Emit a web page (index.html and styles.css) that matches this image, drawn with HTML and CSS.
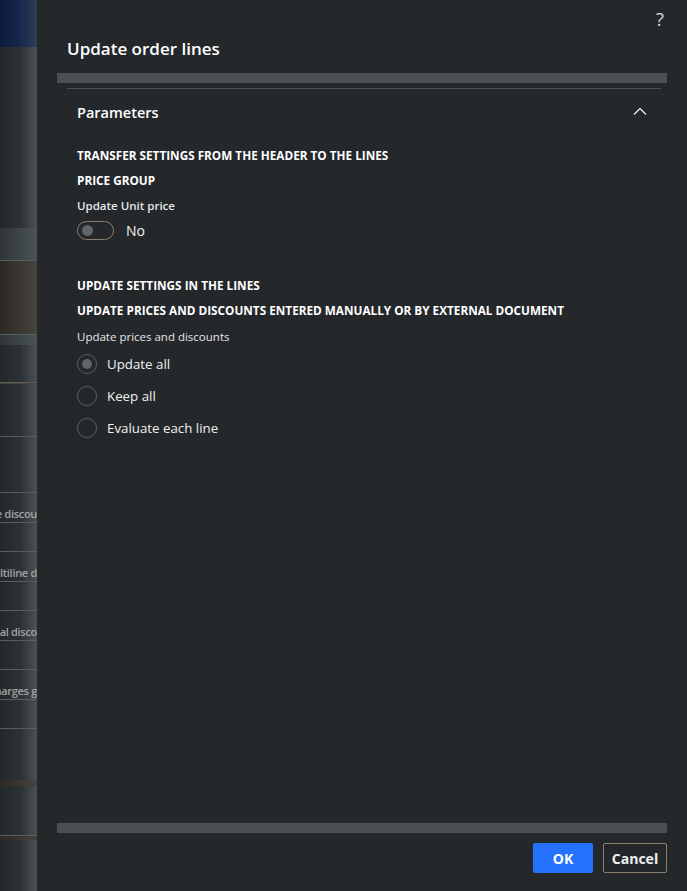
FILE: index.html
```html
<!DOCTYPE html>
<html lang="en">
<head>
  <meta charset="UTF-8">
  <meta name="viewport" content="width=device-width, initial-scale=1.0">
  <title>Update order lines</title>
  <link rel="stylesheet" href="styles.css">
</head>
<body>
  <div class="backdrop">
    <div class="bd-top"></div>
    <div class="bd-gap" style="height:181px"></div>
    <div class="bd-row bd-light" style="height:33px"></div>
    <div class="bd-row bd-brown" style="height:74px"></div>
    <div class="bd-light" style="height:10px"></div>
    <div class="bd-row" style="height:38px"></div>
    <div class="bd-row bd-tan" style="height:54px"></div>
    <div class="bd-row" style="height:56px"></div>
    <div class="bd-row bd-text" style="height:30px"><span>Line discou</span></div>
    <div class="bd-row" style="height:29px"></div>
    <div class="bd-row bd-text" style="height:30px"><span>Multiline d</span></div>
    <div class="bd-row" style="height:29px"></div>
    <div class="bd-row bd-text" style="height:30px"><span>Total disco</span></div>
    <div class="bd-row" style="height:29px"></div>
    <div class="bd-row bd-text" style="height:30px"><span>Charges g</span></div>
    <div class="bd-row" style="height:29px"></div>
    <div class="bd-gap" style="height:51px"></div>
    <div class="bd-brown" style="height:6px"></div>
    <div class="bd-row" style="height:50px"></div>
    <div class="bd-brown" style="height:4px"></div>
  </div>

  <div class="panel">
    <div class="help">?</div>
    <h1>Update order lines</h1>
    <div class="scrollbar"></div>

    <div class="section">
      <div class="section-head">
        <span>Parameters</span>
        <svg class="chevron" width="14" height="8" viewBox="0 0 14 8">
          <path d="M1 7.5 L7 1.5 L13 7.5" fill="none" stroke="#e6e6e6" stroke-width="1.3"/>
        </svg>
      </div>

      <div class="group">TRANSFER SETTINGS FROM THE HEADER TO THE LINES</div>
      <div class="group">PRICE GROUP</div>
      <div class="field-label">Update Unit price</div>
      <div class="toggle-row">
        <span class="toggle"><span class="knob"></span></span>
        <span>No</span>
      </div>

      <div class="group group-spaced">UPDATE SETTINGS IN THE LINES</div>
      <div class="group">UPDATE PRICES AND DISCOUNTS ENTERED MANUALLY OR BY EXTERNAL DOCUMENT</div>
      <div class="field-label plain">Update prices and discounts</div>
      <div class="radios">
        <div class="radio-row"><span class="radio checked"></span>Update all</div>
        <div class="radio-row"><span class="radio"></span>Keep all</div>
        <div class="radio-row"><span class="radio"></span>Evaluate each line</div>
      </div>
    </div>

    <div class="spacer"></div>
    <div class="scrollbar"></div>
    <div class="footer">
      <button class="btn btn-ok">OK</button>
      <button class="btn btn-cancel">Cancel</button>
    </div>
  </div>
</body>
</html>
```

FILE: styles.css
```css
body {
  margin: 0;
  height: 891px;
  display: flex;
  overflow: hidden;
  background: #24282b;
  font-family: "Open Sans", "Noto Sans", sans-serif;
  color: #f2f2f2;
}

.backdrop {
  width: 37px;
  flex: none;
  display: flex;
  flex-direction: column;
  background: linear-gradient(to right, #24282b 0%, #2c3134 55%, #4b5255 100%);
  overflow: hidden;
}

.bd-top {
  height: 47px;
  background: linear-gradient(to right, #0c1b3a 0%, #16264a 50%, #2c3d55 100%);
}

.bd-row {
  border-bottom: 1px solid #5a5e5f;
  box-sizing: border-box;
}

.bd-light {
  background: linear-gradient(to right, #2f3538, #4a5356);
}

.bd-brown {
  background: linear-gradient(to right, #2c2925, #46443f);
}

.bd-tan {
  border-top: 1px solid #4a443c;
}

.bd-text {
  display: flex;
  justify-content: flex-end;
  align-items: flex-end;
  padding-bottom: 1px;
  font-size: 11px;
  font-weight: 600;
  letter-spacing: -0.3px;
  color: #a3a3a3;
  white-space: nowrap;
}

.panel {
  flex: 1;
  display: flex;
  flex-direction: column;
  min-width: 0;
}

.help {
  align-self: flex-end;
  margin: 8px 23px 0 0;
  font-size: 19px;
  line-height: 22px;
  color: #d6d6d6;
}

h1 {
  margin: 6px 0 0 30px;
  font-size: 17px;
  font-weight: 600;
  line-height: 26px;
  color: #ffffff;
}

.scrollbar {
  height: 10px;
  margin: 11px 20px 0;
  background: #4a5053;
}

.section {
  margin: 5px 26px 0 30px;
  border-top: 1px solid #4a4f52;
  padding: 0 10px;
}

.section-head {
  display: flex;
  justify-content: space-between;
  align-items: center;
  height: 46px;
  font-size: 14.5px;
  font-weight: 600;
  color: #ffffff;
}

.chevron {
  margin: 0 4px 3px 0;
}

.group {
  font-size: 11.75px;
  font-weight: 700;
  line-height: 25px;
  color: #ffffff;
}

.section-head + .group {
  margin-top: 8px;
}

.group-spaced {
  margin-top: 32px;
}

.field-label {
  margin-top: 2px;
  font-size: 11.5px;
  font-weight: 600;
  line-height: 22px;
  color: #e6e6e6;
}

.field-label.plain {
  font-weight: 400;
  margin-top: 3px;
}

.toggle-row {
  display: flex;
  align-items: center;
  gap: 12px;
  height: 22px;
  margin-top: 2px;
  font-size: 14px;
}

.toggle {
  width: 37px;
  height: 19px;
  box-sizing: border-box;
  border: 1px solid #8b7f6f;
  border-radius: 10px;
  display: flex;
  align-items: center;
  padding-left: 4px;
}

.knob {
  width: 11px;
  height: 11px;
  border-radius: 50%;
  background: #5f6569;
}

.radio-row {
  display: flex;
  align-items: center;
  gap: 10px;
  height: 32px;
  font-size: 13.3px;
  color: #f0f0f0;
}

.radio {
  width: 20px;
  height: 20px;
  box-sizing: border-box;
  border: 1px solid #5a5f62;
  border-radius: 50%;
  display: flex;
  align-items: center;
  justify-content: center;
}

.radio.checked::after {
  content: "";
  width: 10px;
  height: 10px;
  border-radius: 50%;
  background: #5f6569;
}

.spacer {
  flex: 1;
}

.footer {
  display: flex;
  justify-content: flex-end;
  gap: 10px;
  padding: 10px 20px 18px;
}

.btn {
  height: 30px;
  font-family: inherit;
  font-size: 14px;
  font-weight: 700;
  border-radius: 2px;
  cursor: pointer;
}

.btn-ok {
  width: 60px;
  border: none;
  background: #2672ff;
  color: #ffffff;
}

.btn-cancel {
  width: 64px;
  border: 1px solid #8b7f6f;
  background: transparent;
  color: #f0f0f0;
}
```
